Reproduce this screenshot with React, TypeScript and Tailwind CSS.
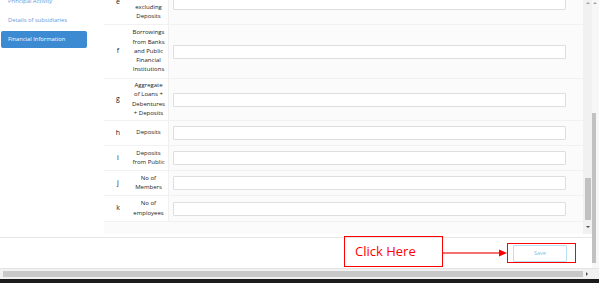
import React from "react";

interface Row {
  key: string;
  label: string[];
  height: string;
}

const rows: Row[] = [
  { key: "e", label: ["Total", "Borrowings", "excluding", "Deposits"], height: "h-[44px]" },
  { key: "f", label: ["Borrowings", "from Banks", "and Public", "Financial", "Institutions"], height: "h-[54px]" },
  { key: "g", label: ["Aggregate", "of Loans +", "Debentures", "+ Deposits"], height: "h-[42px]" },
  { key: "h", label: ["Deposits"], height: "h-[25px]" },
  { key: "i", label: ["Deposits", "from Public"], height: "h-[25px]" },
  { key: "j", label: ["No of", "Members"], height: "h-[25px]" },
  { key: "k", label: ["No of", "employees"], height: "h-[26px]" },
];

const menu = [
  { name: "Principal Activity", active: false },
  { name: "Details of subsidiaries", active: false },
  { name: "Financial Information", active: true },
];

const App: React.FC = () => {
  return (
    <div className="w-[599px] h-[283px] overflow-hidden bg-white flex flex-col font-['Open_Sans',sans-serif]">
      <div className="h-[268px] flex">
        {/* ================= MAIN ================= */}
        <div className="w-[592px] flex flex-col">
          <div className="h-[234px] flex">
            <div className="w-[583px] flex overflow-hidden">
              {/* sidebar */}
              <div className="w-[104px] shrink-0 flex flex-col gap-[2px] -mt-[7px]">
                {menu.map((m) => (
                  <div
                    key={m.name}
                    className={
                      m.active
                        ? "h-[17px] ml-[1px] w-[86px] rounded-[2px] bg-[#3b8ad2] text-white text-[5.8px] flex items-center pl-[7px]"
                        : "h-[17px] ml-[1px] w-[86px] text-[#5f9bdb] text-[5.8px] flex items-center pl-[7px]"
                    }
                  >
                    {m.name}
                  </div>
                ))}
              </div>

              {/* table */}
              <div className="flex-1 flex flex-col -mt-[19px] bg-[#fbfbfb]">
                {rows.map((r) => (
                  <div key={r.key} className={`${r.height} shrink-0 flex items-center border-b border-[#f1f1f1]`}>
                    <div className="w-[28px] h-full flex items-center justify-center text-[7px] text-[#222] bg-white">
                      {r.key}
                    </div>
                    <div className="w-[37px] h-full flex flex-col items-center justify-center overflow-hidden text-[6px] leading-[9.3px] font-medium text-[#222] bg-white border-r border-[#f0f0f0] pr-[3px]">
                      {r.label.map((l) => (
                        <span key={l} className="whitespace-nowrap">
                          {l}
                        </span>
                      ))}
                    </div>
                    <div className="pl-[4px]">
                      <div className="w-[393px] h-[14px] bg-white border border-[#dedede] rounded-[1px]" />
                    </div>
                  </div>
                ))}
              </div>
            </div>

            {/* inner scrollbar */}
            <div className="w-[9px] bg-[#f1f1f1] flex flex-col items-center">
              <div className="h-[6px] flex items-center">
                <div className="w-0 h-0 border-l-[2px] border-r-[2px] border-b-[2px] border-l-transparent border-r-transparent border-b-[#a3a3a3]" />
              </div>
              <div className="h-[172px]" />
              <div className="w-[6px] h-[42px] bg-[#c1c1c1]" />
              <div className="h-[6px]" />
              <div className="w-0 h-0 border-l-[2px] border-r-[2px] border-t-[2px] border-l-transparent border-r-transparent border-t-[#505050]" />
            </div>
          </div>

          {/* ================= FOOTER ================= */}
          <div className="h-[3px]" />
          <div className="h-[31px] border-t border-[#e6e6e6] flex items-start pl-[344px]">
            <div className="w-[99px] h-[31px] -mt-[2px] border border-[#ff0000] flex items-center pl-[10px] text-[13px] text-[#ff0000] font-['Open_Sans',sans-serif]">
              Click Here
            </div>
            <svg width="64" height="12" viewBox="0 0 64 12" className="mt-[10px]">
              <line x1="0" y1="5" x2="57" y2="5" stroke="#f04040" strokeWidth="1.3" />
              <polygon points="56,1.5 64,5 56,8.5" fill="#ff0000" />
            </svg>
            <div className="w-[69px] h-[20px] mt-[5px] border border-[#ff0000] flex items-center pl-[5px]">
              <button className="w-[54px] h-[17px] border border-[#b7e2f5] rounded-[1px] text-[5.5px] text-[#7cc3e6] bg-white">
                Save
              </button>
            </div>
          </div>
        </div>

        {/* outer scrollbar */}
        <div className="w-[7px] flex flex-col bg-[#f7f7f7]">
          <div className="h-[6px] flex items-center pl-[1px]">
            <div className="w-0 h-0 border-l-[2px] border-r-[2px] border-b-[2px] border-l-transparent border-r-transparent border-b-[#a3a3a3]" />
          </div>
          <div className="h-[107px]" />
          <div className="w-[4px] h-[150px] bg-[#c1c1c1]" />
        </div>
      </div>

      {/* horizontal scrollbar */}
      <div className="h-[11px] flex items-center bg-[#f1f1f1] border-t border-[#e4e4e4]">
        <div className="ml-[3px] w-[580px] h-[6px] bg-[#c8c8c8]" />
        <div className="ml-[3px] w-0 h-0 border-t-[2px] border-b-[2px] border-l-[2px] border-t-transparent border-b-transparent border-l-[#505050]" />
      </div>
      <div className="h-[4px] bg-[#1c1c1c]" />
    </div>
  );
};

export default App;
